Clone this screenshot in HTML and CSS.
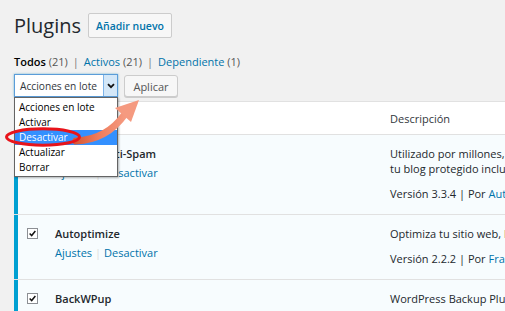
FILE: index.html
```html
<!DOCTYPE html>
<html lang="es">
<head>
<meta charset="utf-8">
<title>Plugins</title>
<link rel="stylesheet" href="styles.css">
</head>
<body>
<div class="wrap">
  <div class="head">
    <h1 class="title">Plugins</h1>
    <a class="add-btn">Añadir nuevo</a>
  </div>
  <ul class="filters">
    <li class="current">Todos <span class="count">(21)</span></li>
    <li class="sep">|</li>
    <li><a>Activos</a> <span class="count">(21)</span></li>
    <li class="sep">|</li>
    <li><a>Dependiente</a> <span class="count">(1)</span></li>
  </ul>
  <div class="tablenav">
    <div class="select">
      <span class="select-label">Acciones en lote</span>
      <span class="select-arrow"><svg width="8" height="6" viewBox="0 0 8 6"><path d="M1 1.2 L4 4.2 L7 1.2" fill="none" stroke="#111" stroke-width="1.8"/></svg></span>
    </div>
    <button class="apply">Aplicar</button>
  </div>
  <div class="table">
    <div class="row header">
      <div class="cb-cell"><span class="cb"></span></div>
      <div class="name-cell">Plugin</div>
      <div class="desc-cell">Descripción</div>
    </div>
    <div class="row active">
      <div class="cb-cell"><span class="cb checked"><svg viewBox="0 0 11 11"><path d="M2 5.5 L4.5 8 L9 2.5" fill="none" stroke="#111" stroke-width="1.8"/></svg></span></div>
      <div class="name-cell">
        <div class="plugin-title">Akismet Anti-Spam</div>
        <div class="actions"><a>Ajustes</a><span class="bar">|</span><a>Desactivar</a></div>
      </div>
      <div class="desc-cell">
        <p class="desc">Utilizado por millones, Akismet es posiblemente la mejor manera de<br>tu blog protegido incluso mientras duermes.</p>
        <p class="meta">Versión 3.3.4 | Por <a>Automattic</a></p>
      </div>
    </div>
    <div class="row active">
      <div class="cb-cell"><span class="cb checked"><svg viewBox="0 0 11 11"><path d="M2 5.5 L4.5 8 L9 2.5" fill="none" stroke="#111" stroke-width="1.8"/></svg></span></div>
      <div class="name-cell">
        <div class="plugin-title">Autoptimize</div>
        <div class="actions"><a>Ajustes</a><span class="bar">|</span><a>Desactivar</a></div>
      </div>
      <div class="desc-cell">
        <p class="desc">Optimiza tu sitio web, haciendo que cargue más rápido.</p>
        <p class="meta">Versión 2.2.2 | Por <a>Frank Goossens (futtta)</a></p>
      </div>
    </div>
    <div class="row active">
      <div class="cb-cell"><span class="cb checked"><svg viewBox="0 0 11 11"><path d="M2 5.5 L4.5 8 L9 2.5" fill="none" stroke="#111" stroke-width="1.8"/></svg></span></div>
      <div class="name-cell">
        <div class="plugin-title">BackWPup</div>
      </div>
      <div class="desc-cell">
        <p class="desc">WordPress Backup Plugin</p>
      </div>
    </div>
  </div>
</div>

<ul class="dropdown">
  <li>Acciones en lote</li>
  <li>Activar</li>
  <li class="hl">Desactivar</li>
  <li>Actualizar</li>
  <li>Borrar</li>
</ul>

<svg class="annot" width="505" height="311" viewBox="0 0 505 311">
  <defs>
    <linearGradient id="ag" x1="0" y1="0" x2="1" y2="0">
      <stop offset="0" stop-color="#d65a38"/>
      <stop offset="0.45" stop-color="#ee7b5b"/>
      <stop offset="1" stop-color="#f59a80"/>
    </linearGradient>
  </defs>
  <path d="M76 141 C 98 140, 113 131, 125 114" fill="none" stroke="url(#ag)" stroke-width="7" stroke-linecap="round"/>
  <path d="M139 100 L 115 108 L 131 122 Z" fill="#f59a80"/>
  <ellipse cx="43" cy="137" rx="36.5" ry="8.2" fill="none" stroke="#e8141b" stroke-width="3"/>
</svg>
</body>
</html>
```

FILE: styles.css
```css
* { box-sizing: border-box; }
html, body { margin: 0; padding: 0; }
body {
  width: 505px;
  height: 311px;
  overflow: hidden;
  background: #f1f1f1;
  font-family: "Open Sans", "Noto Sans", sans-serif;
  font-size: 11px;
  color: #23282d;
  position: relative;
}
a { color: #0073aa; text-decoration: none; }
.wrap { padding: 13px 0 0 14px; width: 640px; }
.head { display: flex; align-items: center; gap: 7px; height: 25px; }
.title { margin: 0; font-size: 20px; font-weight: 400; line-height: 25px; color: #23282d; }
.add-btn {
  display: inline-flex; align-items: center;
  height: 25px; padding: 0 7px;
  border: 1px solid #ccc; border-radius: 2px;
  background: #f7f7f7; font-weight: 600; font-size: 10.5px; color: #0073aa;
}
.filters { list-style: none; margin: 16px 0 0; padding: 0; display: flex; gap: 5px; line-height: 15px; color: #555; }
.filters .current { color: #000; font-weight: 600; }
.filters .current .count { font-weight: 400; color: #555; }
.filters .sep { color: #777; }
.tablenav { display: flex; gap: 6px; margin-top: 5px; height: 23px; }
.select {
  width: 104px; height: 23px; display: flex; align-items: center;
  border: 1px solid #5b9dd9; background: #fff;
  box-shadow: 0 0 2px rgba(30,140,190,.6);
}
.select-label { flex: 1; padding-left: 5px; color: #32373c; white-space: nowrap; font-size: 10.2px; }
.select-arrow {
  width: 14px; height: 21px; display: flex; align-items: center; justify-content: center;
  background: #d3e7f8; border-left: 1px solid #7eb4ea;
}
.apply {
  width: 54px; height: 22px; margin-top: 1px; padding: 0;
  border: 1px solid #ccc; border-radius: 3px; background: #f7f7f7;
  font: inherit; color: #555; box-shadow: 0 1px 0 #ccc;
}
.table { margin-top: 4px; border-top: 1px solid #e1e1e1; }
.row { display: grid; grid-template-columns: 41px 335px 1fr; border-bottom: 1px solid #e1e1e1; }
.row.header { background: #fff; height: 33px; align-items: center; color: #32373c; }
.row.active { background: #f7fcfe; padding: 11px 0 13px; }
.row.active .cb-cell { border-left: 4px solid #00a0d2; margin: -11px 0 -13px; padding-top: 13px; }
.cb-cell { padding-left: 9px; }
.cb {
  display: block; width: 11px; height: 11px;
  border: 1px solid #8c8f94; background: #fff;
}
.cb svg { display: block; width: 9px; height: 9px; }
.header .cb { visibility: hidden; }
.plugin-title { font-weight: 600; line-height: 15px; color: #23282d; }
.actions { margin-top: 4px; line-height: 15px; }
.bar { color: #ddd; margin: 0 3px; }
.desc { margin: 0; line-height: 15px; white-space: nowrap; }
.meta { margin: 10px 0 0; line-height: 15px; white-space: nowrap; color: #23282d; }

.dropdown {
  position: absolute; left: 14px; top: 97px; width: 104px;
  margin: 0; padding: 2px 0 1px; list-style: none;
  background: #fff; border: 1px solid #646464;
  box-shadow: 1px 1px 2px rgba(0,0,0,.3);
  color: #000; font-size: 10px;
}
.dropdown li { height: 15px; line-height: 15px; padding-left: 4px; }
.dropdown li.hl { background: #3390ff; color: #fff; }
.annot { position: absolute; left: 0; top: 0; pointer-events: none; }
```
